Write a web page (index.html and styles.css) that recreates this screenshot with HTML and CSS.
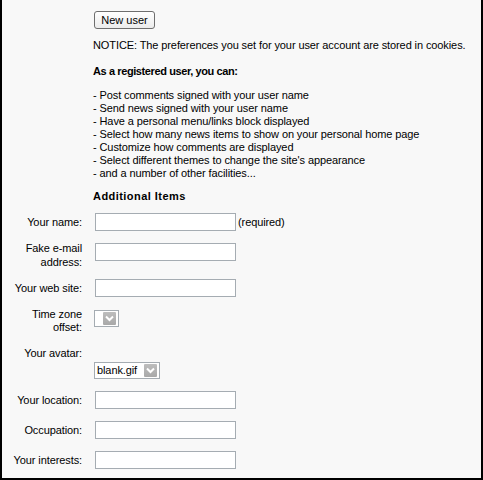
FILE: index.html
```html
<!DOCTYPE html>
<html>
<head>
<meta charset="utf-8">
<link rel="stylesheet" href="styles.css">
</head>
<body>
<div class="frame">
  <div class="intro">
    <button class="btn" type="button">New user</button>
    <p class="notice">NOTICE: The preferences you set for your user account are stored in cookies.</p>
    <p class="heading heading-can">As a registered user, you can:</p>
    <ul class="perks">
      <li>- Post comments signed with your user name</li>
      <li>- Send news signed with your user name</li>
      <li>- Have a personal menu/links block displayed</li>
      <li>- Select how many news items to show on your personal home page</li>
      <li>- Customize how comments are displayed</li>
      <li>- Select different themes to change the site's appearance</li>
      <li>- and a number of other facilities...</li>
    </ul>
    <p class="heading heading-items">Additional Items</p>
  </div>
  <div class="form">
    <div class="row row-name">
      <label class="lbl">Your name:</label>
      <div class="field"><span class="input"></span><span class="note">(required)</span></div>
    </div>
    <div class="row row-email">
      <label class="lbl">Fake e-mail<br>address:</label>
      <div class="field field-top"><span class="input"></span></div>
    </div>
    <div class="row row-web">
      <label class="lbl">Your web site:</label>
      <div class="field"><span class="input"></span></div>
    </div>
    <div class="row row-tz">
      <label class="lbl">Time zone<br>offset:</label>
      <div class="field field-top">
        <span class="select select-tz"><span class="select-value"></span><span class="select-btn"><svg width="9" height="7" viewBox="0 0 9 7"><path d="M1 1.5 L4.5 5 L8 1.5" fill="none" stroke="#fff" stroke-width="2"/></svg></span></span>
      </div>
    </div>
    <div class="row row-avatar">
      <label class="lbl">Your avatar:</label>
      <div class="field"></div>
    </div>
    <div class="row row-avatar-select">
      <span class="lbl"></span>
      <div class="field">
        <span class="select select-avatar"><span class="select-value">blank.gif</span><span class="select-btn"><svg width="9" height="7" viewBox="0 0 9 7"><path d="M1 1.5 L4.5 5 L8 1.5" fill="none" stroke="#fff" stroke-width="2"/></svg></span></span>
      </div>
    </div>
    <div class="row row-loc">
      <label class="lbl">Your location:</label>
      <div class="field"><span class="input"></span></div>
    </div>
    <div class="row row-occ">
      <label class="lbl">Occupation:</label>
      <div class="field"><span class="input"></span></div>
    </div>
    <div class="row row-int">
      <label class="lbl">Your interests:</label>
      <div class="field"><span class="input"></span></div>
    </div>
  </div>
</div>
</body>
</html>
```
FILE: styles.css
```css
html, body {
  margin: 0;
  padding: 0;
  background: #000;
}
.frame {
  box-sizing: border-box;
  width: 483px;
  height: 480px;
  background: #f8f8f8;
  border-left: 2px solid #000;
  border-right: 2px solid #000;
  border-bottom: 2px solid #000;
  font-family: "Liberation Sans", Arial, sans-serif;
  font-size: 11px;
  line-height: 13px;
  letter-spacing: -0.1px;
  color: #000;
  overflow: hidden;
}
.intro {
  padding: 11px 0 0 91px;
}
.btn {
  display: block;
  box-sizing: border-box;
  margin: 0 0 0 1px;
  width: 61px;
  height: 18px;
  padding: 0;
  border: 1px solid #6e6e6e;
  border-radius: 3px;
  background: linear-gradient(#ffffff, #ececec);
  font-family: inherit;
  font-size: 11px;
  letter-spacing: 0;
  color: #000;
}
.notice {
  margin: 10px 0 0;
}
.heading {
  margin: 13px 0 0;
  font-weight: bold;
}
.heading-can {
  letter-spacing: -0.4px;
}
.perks {
  list-style: none;
  margin: 11px 0 0;
  padding: 0;
}
.heading-items {
  margin-top: 10px;
  letter-spacing: 0.45px;
}
.form {
  margin-top: 10px;
}
.row {
  display: flex;
  align-items: center;
}
.lbl {
  width: 80px;
  flex: none;
  text-align: right;
  line-height: 14px;
}
.field {
  margin-left: 12px;
  display: flex;
  align-items: center;
}
.field-top {
  align-self: flex-start;
  margin-top: 2px;
}
.input {
  display: block;
  box-sizing: border-box;
  width: 141px;
  height: 18px;
  margin-left: 1px;
  background: #fff;
  border: 1px solid #a5acb2;
}
.note {
  margin-left: 2px;
}
.row-email { margin-top: 10px; }
.row-web { margin-top: 10px; }
.row-tz { margin-top: 11px; }
.row-tz .lbl { line-height: 13px; }
.row-avatar { margin-top: 12px; }
.row-avatar-select { margin-top: 2px; }
.row-loc { margin-top: 12px; }
.row-occ { margin-top: 12px; }
.row-int { margin-top: 12px; }
.select {
  display: flex;
  align-items: center;
  box-sizing: border-box;
  height: 17px;
  background: #fff;
  border: 1px solid #a5acb2;
  padding: 0 2px 0 2px;
}
.select-tz { width: 25px; }
.select-avatar { width: 66px; }
.select-value {
  flex: 1;
}
.select-btn {
  display: flex;
  align-items: center;
  justify-content: center;
  width: 13px;
  height: 13px;
  background: linear-gradient(#bdbdbd, #a9a9a9);
  border-radius: 1px;
}
```
